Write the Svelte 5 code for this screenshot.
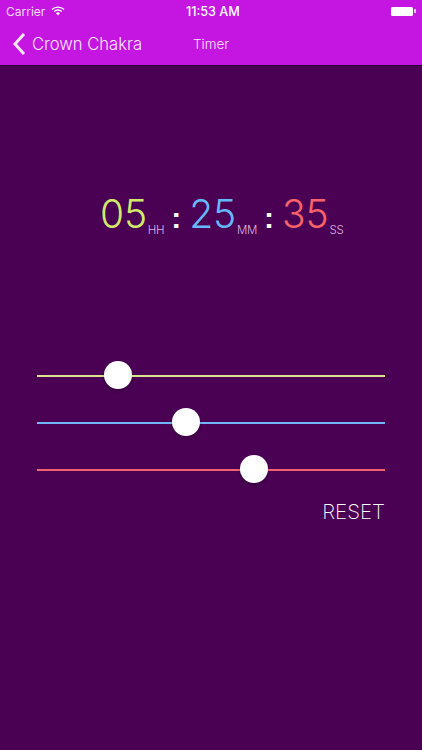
<script>
	const timeParts = [
		{ value: '05', unit: 'HH', color: '#d2ea6c' },
		{ value: '25', unit: 'MM', color: '#67b8fb' },
		{ value: '35', unit: 'SS', color: '#f8636b' }
	];

	const sliders = [
		{ color: '#d9e48a', pos: 19.25 },
		{ color: '#70b6f8', pos: 38.8 },
		{ color: '#f2616f', pos: 58.3 }
	];
</script>

<div class="screen">
	<header class="nav">
		<div class="status">
			<div class="status-left">
				<span>Carrier</span>
				<svg class="wifi" width="14" height="10" viewBox="0 0 14 10">
					<path d="M1 3.6a8.6 8.6 0 0 1 12 0" fill="none" stroke="#fff" stroke-width="1.4" />
					<path d="M3.2 5.6a5.4 5.4 0 0 1 7.6 0" fill="none" stroke="#fff" stroke-width="1.4" />
					<path d="M5 7.3a2.8 2.8 0 0 1 4 0L7 9.6z" fill="#fff" />
				</svg>
			</div>
			<span class="clock">11:53 AM</span>
			<div class="battery">
				<div class="battery-body"></div>
				<div class="battery-tip"></div>
			</div>
		</div>
		<div class="nav-row">
			<svg class="chevron" width="14" height="24" viewBox="0 0 14 24">
				<path d="M12 2 L3 12 L12 22" fill="none" stroke="#fbe6ff" stroke-width="3" />
			</svg>
			<span class="back-label">Crown Chakra</span>
			<span class="title">Timer</span>
		</div>
	</header>

	<main class="content">
		<div class="time">
			{#each timeParts as part, i}
				{#if i > 0}<span class="colon">:</span>{/if}
				<span class="digits" style="color: {part.color}">{part.value}</span>
				<span class="unit">{part.unit}</span>
			{/each}
		</div>

		<div class="sliders">
			{#each sliders as slider}
				<div class="slider">
					<div class="track" style="background: {slider.color}"></div>
					<div class="thumb" style="left: {slider.pos}%"></div>
				</div>
			{/each}
		</div>

		<div class="reset-row">
			<span class="reset">RESET</span>
		</div>
	</main>
</div>

<style>
	:global(body) {
		margin: 0;
		background: #4a0053;
	}

	.screen {
		width: 422px;
		height: 750px;
		display: flex;
		flex-direction: column;
		background: #4a0053;
		font-family: Inter, 'Liberation Sans', sans-serif;
		overflow: hidden;
	}

	.nav {
		height: 66px;
		background: #c516e1;
		color: #fff;
		box-sizing: border-box;
		border-bottom: 1px solid #2e0035;
	}

	.status {
		height: 22px;
		padding: 0 6px;
		display: flex;
		align-items: center;
		justify-content: space-between;
		font-size: 12px;
		position: relative;
	}

	.status-left {
		display: flex;
		align-items: center;
		gap: 6px;
		color: #f7dcfb;
	}

	.clock {
		position: absolute;
		left: 186px;
		font-size: 12.6px;
		font-weight: 500;
	}

	.battery {
		display: flex;
		align-items: center;
	}

	.battery-body {
		width: 22px;
		height: 9px;
		background: #fff;
		border-radius: 1.5px;
	}

	.battery-tip {
		width: 2px;
		height: 4px;
		background: #f0b8f8;
		margin-left: 1px;
	}

	.nav-row {
		height: 44px;
		display: flex;
		align-items: center;
		padding-left: 12px;
		color: #fbe6ff;
	}

	.back-label {
		margin-left: 6px;
		font-size: 16.6px;
		font-weight: 300;
		width: 161px;
	}

	.title {
		font-size: 13.5px;
		font-weight: 300;
	}

	.content {
		flex: 1;
		display: flex;
		flex-direction: column;
	}

	.time {
		margin-top: 124px;
		padding-left: 100px;
		height: 50px;
		display: flex;
		align-items: baseline;
	}

	.digits {
		font-size: 39px;
		font-weight: 300;
		letter-spacing: -0.2px;
	}

	.unit {
		font-size: 11.5px;
		font-weight: 300;
		color: #dcb6e6;
		letter-spacing: -0.3px;
		margin-left: 1px;
		transform: translateY(6px);
	}

	.colon {
		font-family: 'Liberation Sans', sans-serif;
		font-size: 30px;
		font-weight: 700;
		color: #fff;
		margin: 0 8px 0 7px;
	}

	.sliders {
		margin: 121px 37px 0;
		display: flex;
		flex-direction: column;
		gap: 19px;
	}

	.slider {
		position: relative;
		height: 28px;
		display: flex;
		align-items: center;
	}

	.track {
		width: 100%;
		height: 2px;
		margin-top: 2px;
	}

	.thumb {
		position: absolute;
		top: 0;
		width: 28px;
		height: 28px;
		border-radius: 50%;
		background: #fff;
		box-shadow: 0 2px 3px rgba(0, 0, 0, 0.25);
	}

	.reset-row {
		margin: 16px 37px 0;
		display: flex;
		justify-content: flex-end;
	}

	.reset {
		font-size: 20.6px;
		font-weight: 200;
		color: #fff;
	}
</style>
